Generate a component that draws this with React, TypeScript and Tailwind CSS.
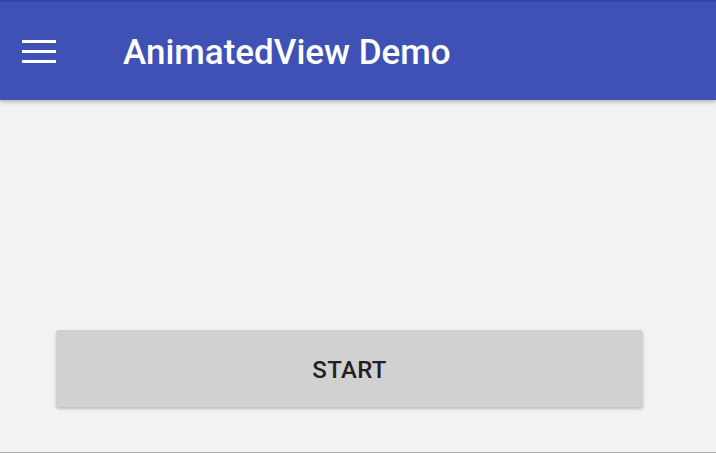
export default function App() {
    return (
        <div className="h-[453px] w-[716px] bg-[#f2f2f2] flex flex-col overflow-hidden" style={{ fontFamily: 'Roboto, "Noto Sans", sans-serif' }}>
            {/* App bar */}
            <header className="h-[100px] shrink-0 bg-[#3f51b5] border-t-2 border-[#3445a8] shadow-[0_2px_4px_rgba(0,0,0,0.25)] flex items-center relative z-10">
                <button className="ml-[22px] w-[34px] h-[23px] flex flex-col justify-between">
                    <span className="block h-[3px] w-full bg-white" />
                    <span className="block h-[3px] w-full bg-white" />
                    <span className="block h-[3px] w-full bg-white" />
                </button>
                <h1 className="ml-[67px] text-[35px] font-medium text-white leading-none pt-[2px]">
                    AnimatedView Demo
                </h1>
            </header>

            {/* Content */}
            <main className="flex-1 flex flex-col pt-[230px]">
                <button className="ml-[56px] w-[587px] h-[77px] bg-[#d1d1d1] rounded-[3px] shadow-[0_2px_3px_rgba(0,0,0,0.22)] flex items-center justify-center pt-[3px]">
                    <span className="text-[24px] font-medium text-[#212121] tracking-[0.3px]">START</span>
                </button>
            </main>

            <div className="h-px shrink-0 bg-[#b0b0b0]" />
        </div>
    )
}
